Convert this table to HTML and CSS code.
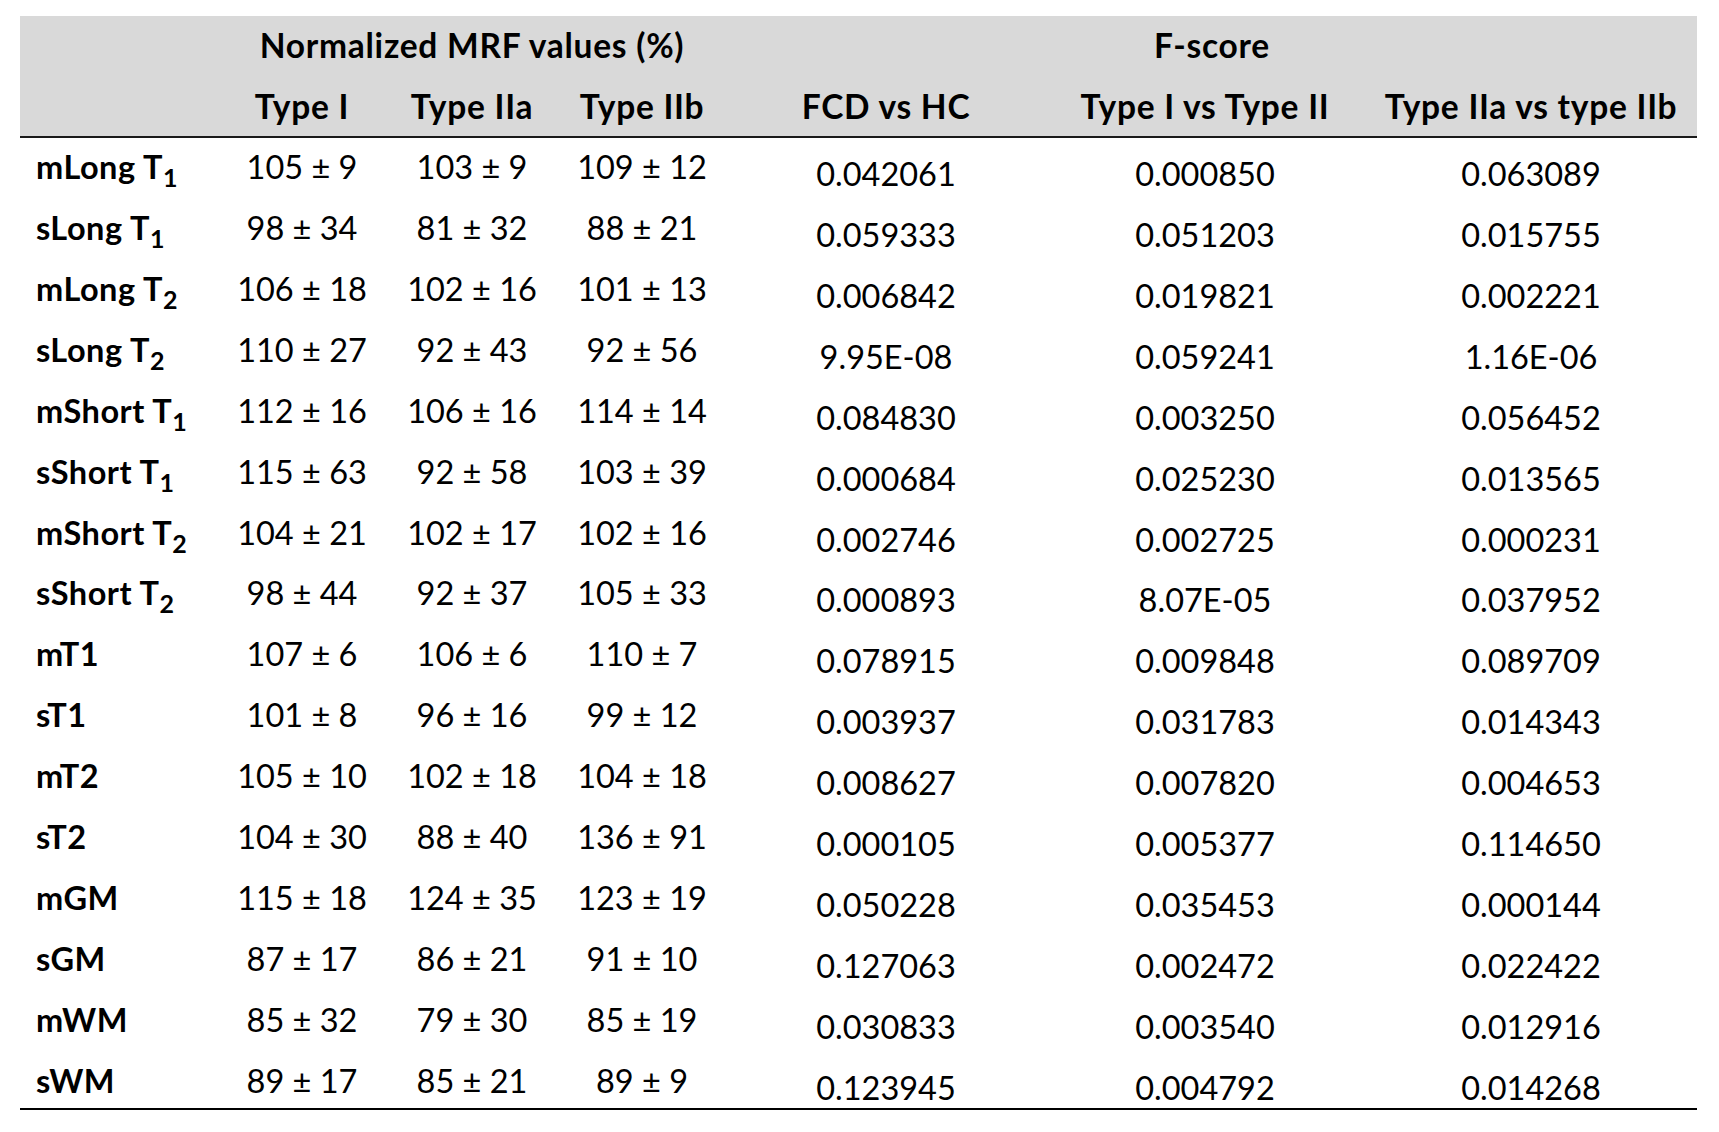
FILE: index.html
```html
<!DOCTYPE html>
<html lang="en">
<head>
<meta charset="utf-8">
<title>Normalized MRF values and F-scores</title>
<link rel="stylesheet" href="styles.css">
</head>
<body>
<table class="mrf">
  <colgroup>
    <col class="c-label">
    <col class="c-type">
    <col class="c-type">
    <col class="c-type">
    <col class="c-fcd">
    <col class="c-t12">
    <col class="c-t2ab">
  </colgroup>
  <thead>
    <tr class="h1">
      <th></th>
      <th colspan="3">Normalized MRF values (%)</th>
      <th colspan="3">F-score</th>
    </tr>
    <tr class="h2">
      <th></th>
      <th>Type I</th>
      <th>Type IIa</th>
      <th>Type IIb</th>
      <th>FCD vs HC</th>
      <th>Type I vs Type II</th>
      <th>Type IIa vs type IIb</th>
    </tr>
  </thead>
  <tbody>
    <tr><th>mLong T<sub>1</sub></th><td>105 ± 9</td><td>103 ± 9</td><td>109 ± 12</td><td class="f">0.042061</td><td class="f">0.000850</td><td class="f">0.063089</td></tr>
    <tr><th>sLong T<sub>1</sub></th><td>98 ± 34</td><td>81 ± 32</td><td>88 ± 21</td><td class="f">0.059333</td><td class="f">0.051203</td><td class="f">0.015755</td></tr>
    <tr><th>mLong T<sub>2</sub></th><td>106 ± 18</td><td>102 ± 16</td><td>101 ± 13</td><td class="f">0.006842</td><td class="f">0.019821</td><td class="f">0.002221</td></tr>
    <tr><th>sLong T<sub>2</sub></th><td>110 ± 27</td><td>92 ± 43</td><td>92 ± 56</td><td class="f">9.95E-08</td><td class="f">0.059241</td><td class="f">1.16E-06</td></tr>
    <tr><th>mShort T<sub>1</sub></th><td>112 ± 16</td><td>106 ± 16</td><td>114 ± 14</td><td class="f">0.084830</td><td class="f">0.003250</td><td class="f">0.056452</td></tr>
    <tr><th>sShort T<sub>1</sub></th><td>115 ± 63</td><td>92 ± 58</td><td>103 ± 39</td><td class="f">0.000684</td><td class="f">0.025230</td><td class="f">0.013565</td></tr>
    <tr><th>mShort T<sub>2</sub></th><td>104 ± 21</td><td>102 ± 17</td><td>102 ± 16</td><td class="f">0.002746</td><td class="f">0.002725</td><td class="f">0.000231</td></tr>
    <tr><th>sShort T<sub>2</sub></th><td>98 ± 44</td><td>92 ± 37</td><td>105 ± 33</td><td class="f">0.000893</td><td class="f">8.07E-05</td><td class="f">0.037952</td></tr>
    <tr><th>mT1</th><td>107 ± 6</td><td>106 ± 6</td><td>110 ± 7</td><td class="f">0.078915</td><td class="f">0.009848</td><td class="f">0.089709</td></tr>
    <tr><th>sT1</th><td>101 ± 8</td><td>96 ± 16</td><td>99 ± 12</td><td class="f">0.003937</td><td class="f">0.031783</td><td class="f">0.014343</td></tr>
    <tr><th>mT2</th><td>105 ± 10</td><td>102 ± 18</td><td>104 ± 18</td><td class="f">0.008627</td><td class="f">0.007820</td><td class="f">0.004653</td></tr>
    <tr><th>sT2</th><td>104 ± 30</td><td>88 ± 40</td><td>136 ± 91</td><td class="f">0.000105</td><td class="f">0.005377</td><td class="f">0.114650</td></tr>
    <tr><th>mGM</th><td>115 ± 18</td><td>124 ± 35</td><td>123 ± 19</td><td class="f">0.050228</td><td class="f">0.035453</td><td class="f">0.000144</td></tr>
    <tr><th>sGM</th><td>87 ± 17</td><td>86 ± 21</td><td>91 ± 10</td><td class="f">0.127063</td><td class="f">0.002472</td><td class="f">0.022422</td></tr>
    <tr><th>mWM</th><td>85 ± 32</td><td>79 ± 30</td><td>85 ± 19</td><td class="f">0.030833</td><td class="f">0.003540</td><td class="f">0.012916</td></tr>
    <tr class="last"><th>sWM</th><td>89 ± 17</td><td>85 ± 21</td><td>89 ± 9</td><td class="f">0.123945</td><td class="f">0.004792</td><td class="f">0.014268</td></tr>
  </tbody>
</table>
</body>
</html>
```
FILE: styles.css
```css
html, body {
  margin: 0;
  padding: 0;
  background: #ffffff;
}

body {
  font-family: Lato, "Open Sans", "Liberation Sans", sans-serif;
  color: #000000;
}

.mrf {
  margin: 16px 0 0 20px;
  width: 1677px;
  table-layout: fixed;
  border-collapse: separate;
  border-spacing: 0;
  font-size: 32.5px;
  line-height: 39px;
}

.c-label { width: 197px; }
.c-type { width: 170px; }
.c-fcd { width: 318px; }
.c-t12 { width: 320px; }
.c-t2ab { width: 332px; }

.mrf th,
.mrf td {
  padding: 0;
  vertical-align: top;
  text-align: center;
  white-space: nowrap;
}

.mrf thead th {
  background: #d9d9d9;
  font-weight: 700;
  font-size: 33.5px;
  letter-spacing: 0.75px;
  padding-top: 10px;
}

.mrf thead tr.h1 { height: 61px; }
.mrf thead tr.h2 { height: 61px; }

.mrf thead tr.h2 th {
  border-bottom: 2px solid #1a1a1a;
}

.mrf tbody tr { height: 60.93px; }

.mrf tbody th {
  text-align: left;
  font-weight: 700;
  letter-spacing: 0.5px;
  padding-left: 16px;
  padding-top: 9px;
}

.mrf tbody td {
  font-weight: 400;
  padding-top: 9px;
}

.mrf tbody td.f {
  padding-top: 16px;
}

.mrf tbody tr.last { height: 58px; }

.mrf tbody tr.last th,
.mrf tbody tr.last td {
  border-bottom: 2px solid #000000;
}

.mrf sub {
  font-size: 25px;
  letter-spacing: 0;
  line-height: 0;
  vertical-align: -8px;
}
```
